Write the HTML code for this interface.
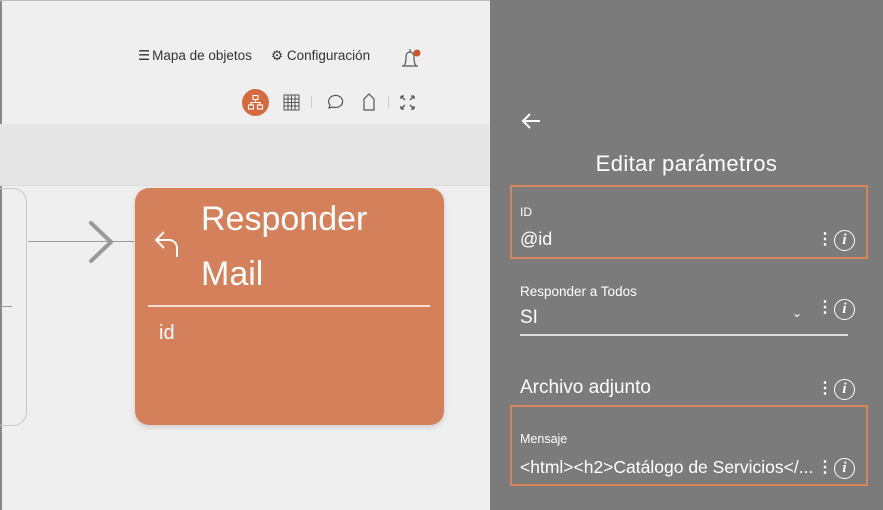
<!DOCTYPE html><html><head><meta charset="utf-8"><style>
*{margin:0;padding:0;box-sizing:border-box}
body{width:883px;height:510px;overflow:hidden;position:relative;background:#efefef;font-family:"Liberation Sans",sans-serif;}
.a{position:absolute}
.t{color:#333;font-size:13.5px}
.pn{left:490px;top:0;width:393px;height:510px;background:#7b7b7b;color:#fff}
.box{border:2px solid #d8845c}
.dots{font-size:16px;font-weight:bold;line-height:1}
.info{width:21px;height:21px;border:1.5px solid #fff;border-radius:50%;font-family:"Liberation Serif",serif;font-style:italic;font-size:15px;text-align:center;line-height:18px;font-weight:bold}
</style></head><body>
<div class="a" style="left:0;top:0;width:2px;height:510px;background:#888"></div>
<div class="a" style="left:0;top:0;width:490px;height:1px;background:#bbb"></div>
<div class="a" style="left:0;top:124px;width:490px;height:62px;background:#e6e6e6"></div>
<div class="a" style="left:0;top:185px;width:490px;height:1px;background:#ddd"></div>
<div class="a t" style="left:138px;top:48px">☰<span style="margin-left:2px">Mapa de objetos</span></div>
<div class="a t" style="left:271px;top:48px">⚙ Configuración</div>
<svg class="a" style="left:398px;top:44px" width="26" height="28" viewBox="0 0 26 28"><path d="M4 22h16M6 22c2-3 2-6 2-10a4 4 0 0 1 8 0c0 4 0 7 2 10M12 8V5" stroke="#555" fill="none" stroke-width="1.2"/><circle cx="19" cy="9" r="3.5" fill="#d0532a"/></svg>
<div class="a" style="left:242px;top:89px;width:27px;height:27px;border-radius:50%;background:#d46a3d"></div>
<svg class="a" style="left:247px;top:94px" width="17" height="17" viewBox="0 0 17 17" fill="none" stroke="#fff" stroke-width="1.1"><rect x="6" y="1.5" width="5" height="4"/><rect x="1.5" y="11" width="5" height="4"/><rect x="10.5" y="11" width="5" height="4"/><path d="M8.5 5.5v3M4 11V8.5h9V11"/></svg>
<svg class="a" style="left:283px;top:94px" width="17" height="17" viewBox="0 0 17 17" fill="none" stroke="#555" stroke-width="1"><rect x="1" y="1" width="15" height="15"/><path d="M1 5h15M1 8.5h15M1 12h15M5 1v15M8.5 1v15M12 1v15"/></svg>
<div class="a" style="left:311px;top:96px;width:1px;height:12px;background:#ccc"></div>
<svg class="a" style="left:325px;top:93px" width="20" height="19" viewBox="0 0 20 19" fill="none" stroke="#555" stroke-width="1.2"><path d="M4 15l1-3a7 6 0 1 1 3 2z"/></svg>
<svg class="a" style="left:362px;top:92px" width="14" height="20" viewBox="0 0 14 20" fill="none" stroke="#555" stroke-width="1.2"><path d="M2 18V7l5-5 5 5v11z"/></svg>
<div class="a" style="left:388px;top:96px;width:1px;height:12px;background:#ccc"></div>
<svg class="a" style="left:399px;top:94px" width="17" height="17" viewBox="0 0 17 17" fill="none" stroke="#555" stroke-width="1.3"><path d="M2 2l4 4M15 2l-4 4M2 15l4-4M15 15l-4-4M2 2h3M2 2v3M15 2h-3M15 2v3M2 15h3M2 15v-3M15 15h-3M15 15v-3"/></svg>
<div class="a" style="left:-20px;top:188px;width:47px;height:238px;border:1px solid #c8c8c8;border-radius:14px"></div>
<div class="a" style="left:0;top:306px;width:12px;height:1px;background:#999"></div>
<div class="a" style="left:28px;top:241px;width:106px;height:1px;background:#999"></div>
<svg class="a" style="left:86px;top:218px" width="30" height="48" viewBox="0 0 30 48"><path d="M5 5l20 19L5 43" stroke="#999" stroke-width="4" fill="none" stroke-linecap="round" stroke-linejoin="round"/></svg>
<div class="a" style="left:135px;top:188px;width:309px;height:237px;background:#d4805a;border-radius:14px;box-shadow:0 2px 6px rgba(0,0,0,.15)"></div>
<svg class="a" style="left:152px;top:228px" width="30" height="32" viewBox="0 0 30 32" fill="none" stroke="#fff" stroke-width="2"><path d="M12 4L4 12l8 8M4 12h13a8 8 0 0 1 8 8v9"/></svg>
<div class="a" style="left:201px;top:192px;color:#fff;font-size:34px;line-height:55px">Responder<br>Mail</div>
<div class="a" style="left:148px;top:305px;width:282px;height:1.5px;background:#f5e0d5"></div>
<div class="a" style="left:159px;top:322px;color:#fff;font-size:20px">id</div>
<div class="a pn">
<svg class="a" style="left:30px;top:111px" width="22" height="20" viewBox="0 0 22 20" fill="none" stroke="#fff" stroke-width="2"><path d="M20 10H3M10 3L3 10l7 7"/></svg>
<div class="a" style="left:0;width:393px;top:151px;text-align:center;font-size:22px;letter-spacing:0.4px">Editar parámetros</div>
<div class="a box" style="left:20px;top:185px;width:358px;height:74px"></div>
<div class="a" style="left:30px;top:205px;font-size:12px">ID</div>
<div class="a" style="left:30px;top:229px;font-size:18px">@id</div>
<div class="a dots" style="left:327px;top:232px">⋮</div>
<div class="a info" style="left:344px;top:230px">i</div>
<div class="a" style="left:30px;top:284px;font-size:13.5px">Responder a Todos</div>
<div class="a" style="left:30px;top:307px;font-size:19px">SI</div>
<div class="a" style="left:302px;top:306px;font-size:12px">⌄</div>
<div class="a dots" style="left:327px;top:300px">⋮</div>
<div class="a info" style="left:344px;top:299px">i</div>
<div class="a" style="left:30px;top:334px;width:328px;height:1.5px;background:#ddd"></div>
<div class="a" style="left:30px;top:377px;font-size:19px">Archivo adjunto</div>
<div class="a dots" style="left:327px;top:381px">⋮</div>
<div class="a info" style="left:344px;top:379px">i</div>
<div class="a box" style="left:20px;top:405px;width:358px;height:81px"></div>
<div class="a" style="left:30px;top:432px;font-size:12.5px">Mensaje</div>
<div class="a" style="left:30px;top:457px;font-size:17.5px;white-space:nowrap">&lt;html&gt;&lt;h2&gt;Catálogo de Servicios&lt;/...</div>
<div class="a dots" style="left:327px;top:460px">⋮</div>
<div class="a info" style="left:344px;top:458px">i</div>
</div>
</body></html>
